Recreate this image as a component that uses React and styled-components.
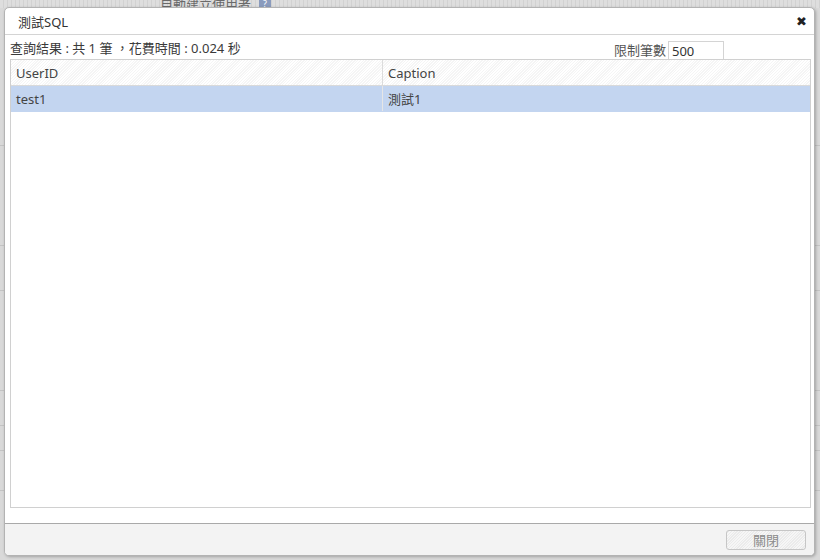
import React from 'react';
import styled, { createGlobalStyle } from 'styled-components';

const GlobalStyle = createGlobalStyle`
  html, body {
    margin: 0;
    padding: 0;
    width: 820px;
    height: 560px;
    overflow: hidden;
    font-family: "Noto Sans", "Noto Sans CJK TC", sans-serif;
    font-size: 13px;
    color: #333;
  }
`;

const rows = [{ userId: 'test1', caption: '測試1' }];

function BackgroundPage() {
  return (
    <PageBase>
      <PageTopStrip>
        <PageTopText>自動建立使用者</PageTopText>
        <PageHelpBadge>?</PageHelpBadge>
      </PageTopStrip>
      {[145, 245, 290, 390, 425, 450, 490].map((y) => (
        <PageLine key={y} style={{ top: y }} />
      ))}
    </PageBase>
  );
}

function DialogHeader() {
  return (
    <TitleBar>
      <TitleText>測試SQL</TitleText>
      <CloseButton>✖</CloseButton>
    </TitleBar>
  );
}

function ResultToolbar() {
  return (
    <Toolbar>
      <ResultSummary>查詢結果 : 共 1 筆 ，花費時間 : 0.024 秒</ResultSummary>
      <LimitBox>
        <LimitLabel>限制筆數</LimitLabel>
        <LimitInput defaultValue="500" />
      </LimitBox>
    </Toolbar>
  );
}

function ResultGrid() {
  return (
    <Grid>
      <GridRow $header>
        <GridCell $header>UserID</GridCell>
        <GridCell $header>Caption</GridCell>
      </GridRow>
      {rows.map((row) => (
        <GridRow key={row.userId} $selected>
          <GridCell>{row.userId}</GridCell>
          <GridCell>{row.caption}</GridCell>
        </GridRow>
      ))}
    </Grid>
  );
}

export default function App() {
  return (
    <React.Fragment>
      <GlobalStyle />
      <BackgroundPage />
      <Dialog>
        <DialogHeader />
        <DialogBody>
          <ResultToolbar />
          <ResultGrid />
        </DialogBody>
        <Footer>
          <FooterButton>關閉</FooterButton>
        </Footer>
      </Dialog>
    </React.Fragment>
  );
}

const PageBase = styled.div`
  position: relative;
  width: 820px;
  height: 560px;
  background: #d9d9d9;
`;

const PageTopStrip = styled.div`
  display: flex;
  align-items: flex-start;
  gap: 8px;
  height: 8px;
  padding-left: 160px;
  overflow: hidden;
  background: repeating-linear-gradient(90deg, #dedede 0 3px, #d2d2d2 3px 4px);
`;

const PageTopText = styled.span`
  font-size: 13px;
  line-height: 13px;
  margin-top: -2px;
  color: #6a6a6a;
`;

const PageHelpBadge = styled.span`
  width: 12px;
  height: 12px;
  margin-top: -3px;
  border-radius: 2px;
  background: #8a9bbd;
  color: #fff;
  font-size: 9px;
  text-align: center;
`;

const PageLine = styled.div`
  position: absolute;
  left: 0;
  right: 0;
  height: 1px;
  background: #c4c4c4;
`;

const Dialog = styled.div`
  position: absolute;
  left: 4px;
  top: 7px;
  width: 809px;
  height: 547px;
  display: flex;
  flex-direction: column;
  background: #fff;
  border: 1px solid #b3b3b3;
  border-radius: 5px;
  box-shadow: 1px 1px 3px rgba(0, 0, 0, 0.25);
  overflow: hidden;
`;

const TitleBar = styled.div`
  display: flex;
  align-items: center;
  justify-content: space-between;
  height: 26px;
  padding: 0 7px 0 13px;
  border-bottom: 1px solid #d4d4d4;
`;

const TitleText = styled.div`
  font-size: 13px;
  color: #333;
`;

const CloseButton = styled.div`
  font-size: 13px;
  font-weight: bold;
  color: #222;
  font-family: "DejaVu Sans", sans-serif;
`;

const DialogBody = styled.div`
  flex: 1;
  display: flex;
  flex-direction: column;
  padding: 5px 3px 15px 5px;
`;

const Toolbar = styled.div`
  display: flex;
  align-items: flex-end;
  justify-content: space-between;
  height: 19px;
  padding-right: 87px;
`;

const ResultSummary = styled.div`
  font-size: 13px;
  line-height: 16px;
  padding-bottom: 3px;
  color: #3a3a3a;
`;

const LimitBox = styled.div`
  display: flex;
  align-items: flex-end;
  gap: 2px;
`;

const LimitLabel = styled.span`
  font-size: 13px;
  line-height: 16px;
  padding-bottom: 1px;
  color: #555;
`;

const LimitInput = styled.input`
  width: 56px;
  height: 18px;
  box-sizing: border-box;
  border: 1px solid #d4d4d4;
  border-bottom: none;
  padding: 0 3px;
  font-family: inherit;
  font-size: 13px;
  color: #333;
  outline: none;
`;

const Grid = styled.div`
  flex: 1;
  border: 1px solid #d0d0d0;
  background: #fff;
`;

const GridRow = styled.div`
  display: grid;
  grid-template-columns: 372px 1fr;
  height: 26px;
  box-sizing: border-box;
  border-bottom: 1px solid ${(p) => (p.$header ? '#dadada' : 'transparent')};
  background: ${(p) =>
    p.$header
      ? 'repeating-linear-gradient(135deg, #ffffff 0 1px, #f5f5f5 1px 2px)'
      : p.$selected
        ? '#c3d5f0'
        : '#fff'};
`;

const GridCell = styled.div`
  display: flex;
  align-items: center;
  padding-left: 5px;
  font-size: 13px;
  color: #444;
  border-right: 1px solid ${(p) => (p.$header ? '#dcdcdc' : '#e6e6e6')};
  &:last-child {
    border-right: none;
  }
`;

const Footer = styled.div`
  display: flex;
  align-items: center;
  justify-content: flex-end;
  height: 31px;
  padding-right: 8px;
  border-top: 1px solid #a9a9a9;
  background: #f3f3f3;
`;

const FooterButton = styled.button`
  width: 80px;
  height: 20px;
  border: 1px solid #c6c6c6;
  border-radius: 3px;
  background: repeating-linear-gradient(135deg, #f6f6f6 0 1px, #ebebeb 1px 2px);
  font-family: inherit;
  font-size: 13px;
  line-height: 16px;
  color: #8a8a8a;
  padding: 0;
`;
